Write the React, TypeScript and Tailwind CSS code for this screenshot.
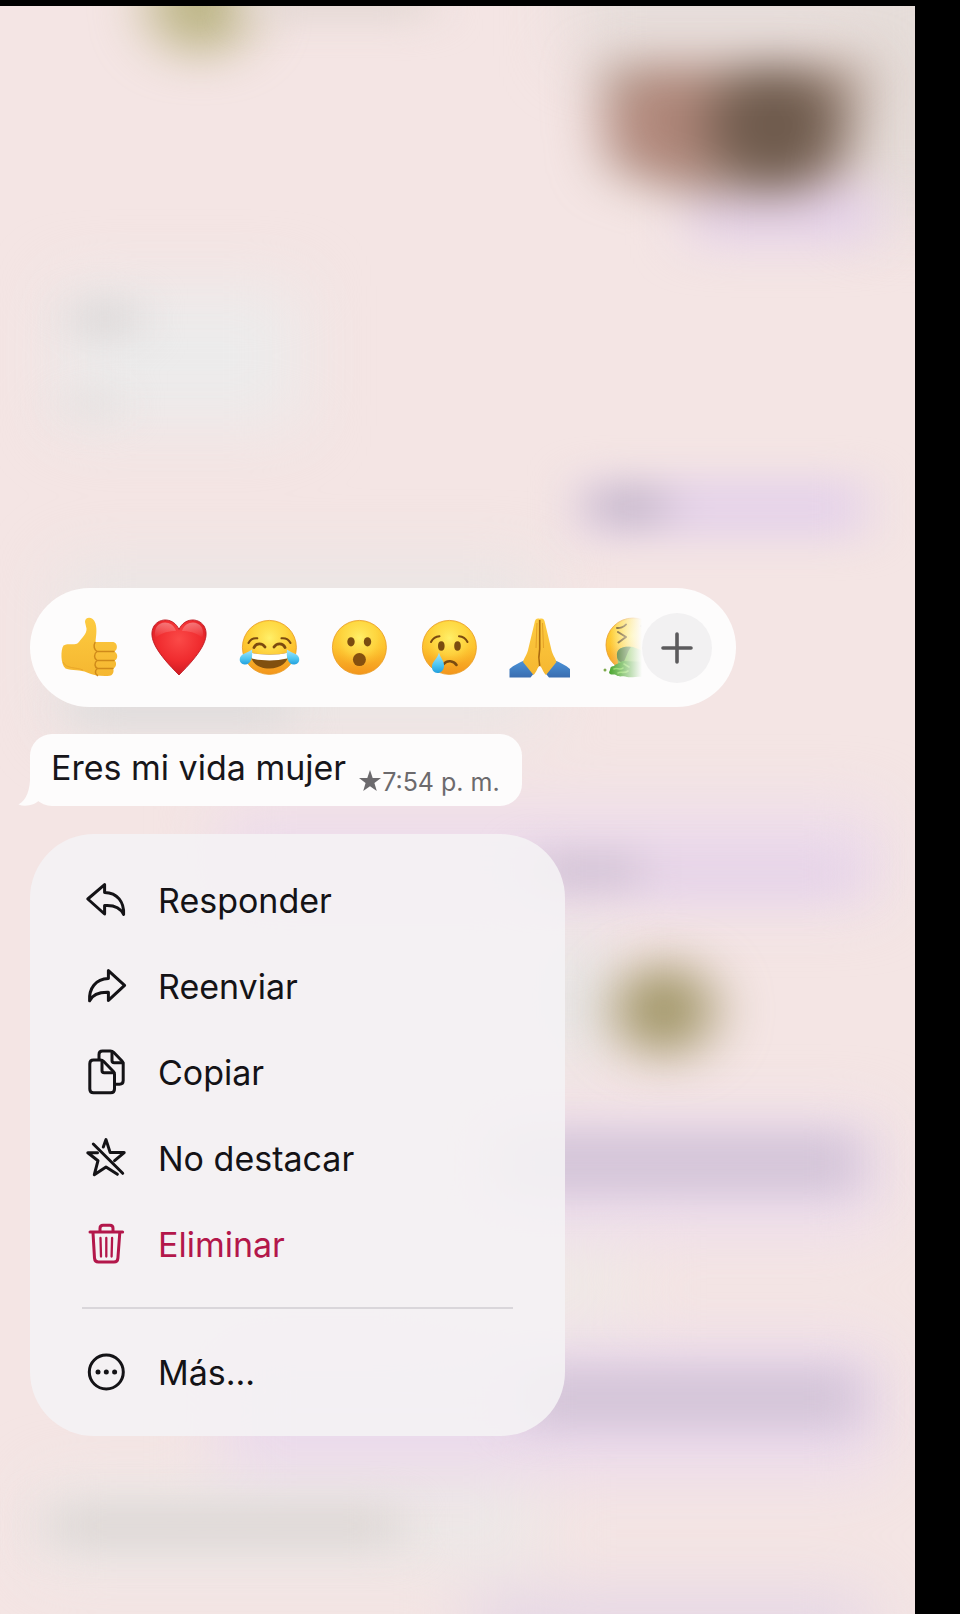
import type { ReactNode } from "react";

type MenuItem = {
  label: string;
  icon: ReactNode;
  danger?: boolean;
};

function MenuIcon({ children }: { children: ReactNode }) {
  return (
    <svg
      viewBox="0 0 48 48"
      className="size-12 shrink-0"
      fill="none"
      stroke="currentColor"
      strokeWidth="3"
      strokeLinecap="round"
      strokeLinejoin="round"
      aria-hidden="true"
    >
      {children}
    </svg>
  );
}

const items: MenuItem[] = [
  {
    label: "Responder",
    icon: (
      <MenuIcon>
        <path d="M22.6 8.6 5.8 23 22.6 38V29.6C31 29 38 31 41.6 38.4 42.2 26 35.5 16.8 22.6 16.5Z" />
      </MenuIcon>
    ),
  },
  {
    label: "Reenviar",
    icon: (
      <MenuIcon>
        <path d="M26.4 8.6 42.6 23.4 26.4 38.4V30.2C18 30 11 31.5 7.6 38.8 6.8 26.5 13.5 17 26.4 16.6Z" />
      </MenuIcon>
    ),
  },
  {
    label: "Copiar",
    icon: (
      <MenuIcon>
        <path d="M17 11V6.5C17 4.2 18.5 3 20.5 3H28.5C29.8 3 30.7 3.4 31.6 4.3L40 13C40.9 14 41.2 14.7 41.2 16V32.5C41.2 35 40 36.2 37.5 36.2H33" />
        <path d="M30 4V12.5C30 14 30.8 14.8 32.2 14.8H41" />
        <path d="M11.5 12H18.5C19.8 12 20.6 12.3 21.5 13.2L31.4 23.5C32.3 24.5 32.5 25.2 32.5 26.4V41C32.5 43.5 31.2 44.8 28.7 44.8H11.5C9 44.8 7.8 43.5 7.8 41V15.800C7.8 13.3 9 12 11.5 12Z" />
        <path d="M20 13V22.5C20 24 20.6 24.8 22.2 24.8H32" />
      </MenuIcon>
    ),
  },
  {
    label: "No destacar",
    icon: (
      <MenuIcon>
        <path d="M11.3 10 40.7 39.3" />
        <path d="M21.3 13 24 5.6 28.2 18.6H42.2L32.6 26.7" />
        <path d="M15.5 18.7H5.8L16 26.7 12.3 40.7 24 33 35.4 40.3" />
      </MenuIcon>
    ),
  },
  {
    label: "Eliminar",
    danger: true,
    icon: (
      <MenuIcon>
        <path d="M8 12H40.6" />
        <path d="M18 11.6V8.2C18 6.2 19 5.2 21 5.2H28C30 5.2 31 6.2 31 8.2V11.6" />
        <path d="M11 12.6 12.5 38.2C12.7 40.9 13.8 42.100 16.4 42.100H32C34.6 42.100 35.7 40.9 35.9 38.2L37.8 12.6" />
        <path strokeWidth="2.3" d="M18.5 18 19 36.5M24.3 18V36.5M30.1 18 29.6 36.5" />
      </MenuIcon>
    ),
  },
];

const moreItem: MenuItem = {
  label: "Más...",
  icon: (
    <MenuIcon>
      <circle cx="24.3" cy="24" r="17" />
      <g fill="currentColor" stroke="none">
        <circle cx="16" cy="24" r="2.5" />
        <circle cx="24.3" cy="24" r="2.5" />
        <circle cx="32.6" cy="24" r="2.5" />
      </g>
    </MenuIcon>
  ),
};

function EmojiDefs() {
  return (
    <svg className="absolute size-0" aria-hidden="true">
      <defs>
        <linearGradient id="face" x1="0" y1="0" x2="0" y2="1">
          <stop offset="0" stopColor="#fcd23a" />
          <stop offset="0.5" stopColor="#fdc22e" />
          <stop offset="1" stopColor="#f3951c" />
        </linearGradient>
        <radialGradient id="shine" cx="0.5" cy="0.32" r="0.55">
          <stop offset="0" stopColor="#fff06a" />
          <stop offset="0.6" stopColor="#ffde48" stopOpacity="0.6" />
          <stop offset="1" stopColor="#ffc52e" stopOpacity="0" />
        </radialGradient>
        <linearGradient id="skin" x1="0" y1="0" x2="0" y2="1">
          <stop offset="0" stopColor="#fdcb40" />
          <stop offset="1" stopColor="#f5b731" />
        </linearGradient>
        <radialGradient id="heart" cx="0.5" cy="0.35" r="0.65">
          <stop offset="0" stopColor="#fb4a48" />
          <stop offset="0.6" stopColor="#f02c2f" />
          <stop offset="1" stopColor="#cf1a22" />
        </radialGradient>
        <linearGradient id="gloss" x1="0" y1="0" x2="0" y2="1">
          <stop offset="0" stopColor="#ffffff" stopOpacity="0.5" />
          <stop offset="1" stopColor="#ffffff" stopOpacity="0" />
        </linearGradient>
        <linearGradient id="tear" x1="0" y1="0" x2="0" y2="1">
          <stop offset="0" stopColor="#a9e6fb" />
          <stop offset="0.6" stopColor="#4fc6f1" />
          <stop offset="1" stopColor="#239fdd" />
        </linearGradient>
        <linearGradient id="sleeve" x1="0" y1="0" x2="0" y2="1">
          <stop offset="0" stopColor="#4b93d8" />
          <stop offset="1" stopColor="#3a6db0" />
        </linearGradient>
      </defs>
    </svg>
  );
}

function Emoji({ children }: { children: ReactNode }) {
  return (
    <svg viewBox="0 0 60 60" className="size-[60px] shrink-0 overflow-visible" aria-hidden="true">
      {children}
    </svg>
  );
}

function Face({ cx = 29.4, cy = 29.4 }: { cx?: number; cy?: number }) {
  return (
    <>
      <circle cx={cx} cy={cy} r="27" fill="url(#face)" stroke="#e99a22" strokeWidth="0.8" />
      <circle cx={cx} cy={cy} r="26" fill="url(#shine)" />
    </>
  );
}

const reactions = [
  {
    name: "Me gusta",
    art: (
      <Emoji>
        <path
          d="M25 4C25 -1.5 33 -2 35.5 5.5 37.3 12 36 18 35.5 24H53.5C58 25 58 32.5 54 33.5 58.5 35 58 41.5 54.5 42.5 57 44 56.5 49.5 53 50.5 54.5 53 53 57.5 49.5 57.8 42 58.4 33 57.5 27 54.5 21 51.5 12 53 5.5 50.5 0.5 46 0.5 32 3.5 27.5 8 24.500 14 28 18 25 22 20 27 15.500 26.500 10.500Z"
          fill="url(#skin)"
        />
        <path
          d="M35 24.5C33 28 34.5 32 37 33.5H54M37 33.5C33.5 36 34 40.5 37 42.5H54M37 42.5C34 45 34.5 49 37.5 50.5H53M37.5 50.5C34.5 52.5 35 56 37.5 57.5"
          fill="none"
          stroke="#cf8a1a"
          strokeWidth="1.5"
          strokeLinecap="round"
        />
        <path d="M3 44C6 51 16 49 23 52" fill="none" stroke="#e09a22" strokeWidth="1" opacity="0.6" />
      </Emoji>
    ),
  },
  {
    name: "Me encanta",
    art: (
      <Emoji>
        <path
          d="M29 11.5C34 0 48 -1 54 8 61 20 50 36 29 57 8 36 -3 20 4 8 10 -1 24 0 29 11.5Z"
          fill="url(#heart)"
          stroke="#bd1a22"
          strokeWidth="0.9"
        />
        <path d="M26 13C23 3 11 2 6.5 9 4 14 5 19 6 20 11 14 21 13 26 13Z" fill="url(#gloss)" opacity="0.7" />
        <path d="M32 13C35 3 47 2 51.5 9 54 14 53 19 52 20 47 14 37 13 32 13Z" fill="url(#gloss)" opacity="0.7" />
      </Emoji>
    ),
  },
  {
    name: "Me divierte",
    art: (
      <Emoji>
        <Face />
        <g fill="none" stroke="#7b4a10" strokeLinecap="round">
          <path strokeWidth="2.8" d="M14 29.5C16 24.5 22.5 25 25 29M34 29C36.5 25 43 24.5 45 29.5" />
          <path strokeWidth="2" d="M8.5 25C10 22 13 19.8 17.3 20.3M50.5 25C49 22 46 19.8 41.5 20.3" />
        </g>
        <path d="M10.5 34.5C22 37.5 37 37.5 48.5 34.5 49 44 41 50.5 29.5 50.5 18 50.5 10 44 10.5 34.5Z" fill="#81500f" />
        <path d="M10.5 34.5C22 37.5 37 37.5 48.5 34.5 48.5 37 48 39 47 40.5 36 43 23 43 12 40.5 11 39 10.5 37 10.5 34.5Z" fill="#fff" />
        <path d="M12 31.5C13 39 11 47 4.5 46.5 -1.5 46 -1.5 39 2.5 36.5 6 34.5 10 33.5 12 31.5Z" fill="url(#tear)" />
        <path d="M47 31.5C46 39 48 47 54.5 46.5 60.5 46 60.5 39 56.5 36.5 53 34.5 49 33.5 47 31.5Z" fill="url(#tear)" />
      </Emoji>
    ),
  },
  {
    name: "Me asombra",
    art: (
      <Emoji>
        <Face />
        <ellipse cx="21" cy="23.8" rx="3.7" ry="4.6" fill="#7a4c10" />
        <ellipse cx="37.5" cy="23.8" rx="3.7" ry="4.6" fill="#7a4c10" />
        <circle cx="29.4" cy="41.6" r="6.5" fill="#85500f" />
      </Emoji>
    ),
  },
  {
    name: "Me entristece",
    art: (
      <Emoji>
        <Face />
        <ellipse cx="21.3" cy="28" rx="3.3" ry="4.8" fill="#7a4c10" />
        <ellipse cx="37.5" cy="28" rx="3.3" ry="4.8" fill="#7a4c10" />
        <g fill="none" stroke="#7b4a10" strokeLinecap="round">
          <path strokeWidth="2" d="M11 24C12.5 21 15.5 18.5 19.5 18.2M39 18.2C43 18.5 46 21 47.5 24" />
          <path strokeWidth="2.6" d="M24 45.8C27 42 33.5 42.3 36.5 47" />
        </g>
        <path d="M19 34.5C20.5 40.5 24.5 43 24 48.5 23.5 52.5 21 55 17.5 55 14 55 11.5 52 12 48 12.5 43.5 17.5 40.5 19 34.5Z" fill="url(#tear)" />
      </Emoji>
    ),
  },
  {
    name: "Gracias",
    art: (
      <Emoji>
        <path d="M14 42.5C9 45 4 47 -0.5 51V59.5H20.5L25 54Z" fill="url(#sleeve)" />
        <path d="M45.5 42.5C50.5 45 55.5 47 60 51V59.5H39L34.5 54Z" fill="url(#sleeve)" />
        <path
          d="M29.7 0.8C27 0 25 1 24.5 5L18.5 30C17.5 36 14.5 39 13 44L23.5 57C27 53.5 27.5 49 29.7 48 32 49 32.5 53.5 36 57L46.5 44C45 39 42 36 41 30L35 5C34.5 1 32.5 0 29.7 0.8Z"
          fill="url(#skin)"
        />
        <path d="M29.7 2V31C28.5 37 28.5 42 29.7 48" fill="none" stroke="#a9690f" strokeWidth="1.6" />
        <path d="M27 5 26 30M32.5 5 33.5 30" fill="none" stroke="#e09822" strokeWidth="1" opacity="0.8" />
      </Emoji>
    ),
  },
  {
    name: "Me da asco",
    art: (
      <Emoji>
        <Face cx={33} cy={27} />
        <g fill="none" stroke="#6d5218" strokeWidth="2" strokeLinecap="round" strokeLinejoin="round">
          <path d="M17 10C19.5 10.5 24 9 26 6.5M18 14 26 19 18.5 24.5M41 8 44 9" />
        </g>
        <path d="M17 38C16 30 24 28 33 29L46 34V58H20Z" fill="#7fc24f" />
        <path d="M17 38C16 30 24 28 31 29 27 34 26 41 23 45 20 44 17 42 17 38Z" fill="#4e7c34" />
        <path
          d="M22 43C20 46 16 45 14 48 9 48 11 52 9 54 9 58 14 55.5 16 57 20 60 23 57 27 59 32 60 38 58 46 59V44Z"
          fill="#4fa833"
        />
        <path d="M14 51C17 49 20 53 23 50M18 55C21 53 24 56 28 53M24 46 29 49" fill="none" stroke="#84d455" strokeWidth="1.6" strokeLinecap="round" />
        <circle cx="5" cy="52" r="1.5" fill="#7ea84c" />
      </Emoji>
    ),
  },
];

/* Blurred conversation behind the open menu */
function ChatBackdrop() {
  return (
    <svg
      viewBox="0 0 915 1608"
      preserveAspectRatio="none"
      className="absolute inset-0 size-full"
      colorInterpolationFilters="sRGB"
      aria-hidden="true"
    >
      <defs>
        <filter id="blurL" filterUnits="userSpaceOnUse" x="-100" y="-100" width="1115" height="1808">
          <feGaussianBlur stdDeviation="32" />
        </filter>
        <filter id="blurM" filterUnits="userSpaceOnUse" x="-100" y="-100" width="1115" height="1808">
          <feGaussianBlur stdDeviation="27 23" />
        </filter>
        <filter id="blurS" filterUnits="userSpaceOnUse" x="-100" y="-100" width="1115" height="1808">
          <feGaussianBlur stdDeviation="24 17" />
        </filter>
      </defs>
      <rect width="915" height="1608" fill="#f4e5e4" />
      <g filter="url(#blurL)">
        <rect x="570" y="-60" width="400" height="110" fill="#e6ddda" />
        <rect x="850" y="-20" width="120" height="230" fill="#e5dcd8" />
        <rect x="60" y="280" width="240" height="140" fill="#ecebeb" />
        <rect x="60" y="560" width="480" height="160" fill="#e9e6e5" />
        <rect x="220" y="805" width="660" height="90" fill="#ecdbec" />
        <rect x="540" y="930" width="60" height="120" fill="#e3e6e6" />
        <rect x="500" y="1115" width="380" height="110" fill="#ecdcec" />
        <rect x="450" y="1240" width="180" height="80" fill="#efe9e6" />
        <rect x="220" y="1340" width="660" height="125" fill="#ead9ec" />
        <rect x="40" y="1480" width="500" height="80" fill="#ece8e7" />
        <rect x="470" y="1590" width="400" height="60" fill="#e3d5e6" />
      </g>
      <g filter="url(#blurM)">
        <rect x="690" y="175" width="185" height="62" fill="#e4d1ea" />
        <path d="M600 55H870L850 165 800 192H700L610 165Z" fill="#b09b8e" />
        <ellipse cx="680" cy="120" rx="76" ry="54" fill="#b0877a" />
        <ellipse cx="775" cy="120" rx="68" ry="60" fill="#6f5b4d" />
        <ellipse cx="200" cy="0" rx="52" ry="48" fill="#bcb585" />
        <ellipse cx="664" cy="1004" rx="50" ry="46" fill="#a3986a" />
      </g>
      <g filter="url(#blurS)">
        <rect x="250" y="-20" width="180" height="34" fill="#e2d7d3" />
        <rect x="75" y="293" width="60" height="40" fill="#dcd8d8" />
        <rect x="70" y="383" width="45" height="30" fill="#e3dfde" />
        <rect x="580" y="470" width="285" height="64" fill="#e6d4e9" />
        <ellipse cx="628" cy="500" rx="42" ry="24" fill="#cabccd" />
        <rect x="70" y="686" width="220" height="34" fill="#dedbdb" />
        <rect x="530" y="842" width="125" height="46" fill="#d6c6d8" />
        <rect x="640" y="842" width="215" height="50" fill="#e7d5e8" />
        <rect x="500" y="1124" width="360" height="66" fill="#d5c6d9" />
        <rect x="520" y="1360" width="340" height="64" fill="#d5c6d9" />
        <rect x="50" y="1496" width="350" height="48" fill="#dfd9d7" />
      </g>
    </svg>
  );
}

function MenuRow({ item }: { item: MenuItem }) {
  return (
    <li>
      <button
        type="button"
        className={`flex h-[86px] w-full items-center gap-7 px-[52px] text-left text-[34px] ${
          item.danger ? "text-[#b3174a]" : "text-[#141316]"
        }`}
      >
        {item.icon}
        {item.label}
      </button>
    </li>
  );
}

export default function App() {
  return (
    <div className="flex min-h-screen bg-black pt-1.5 pr-[45px] font-['Inter','Liberation_Sans',sans-serif]">
      <EmojiDefs />
      <main className="relative isolate flex-1 overflow-hidden px-[30px] pt-[582px]">
        <ChatBackdrop />

        <div className="relative flex flex-col items-start">
          <div className="flex h-[119px] w-full max-w-[706px] items-center rounded-full bg-[#fdfcfc] pr-6 pl-[15px]">
            <div className="relative flex flex-1 overflow-hidden py-4">
              {reactions.map((reaction) => (
                <button
                  key={reaction.name}
                  type="button"
                  aria-label={reaction.name}
                  className="flex w-[90px] shrink-0 justify-center"
                >
                  {reaction.art}
                </button>
              ))}
              <div className="pointer-events-none absolute inset-y-0 right-0 w-8 bg-linear-to-r from-[#fdfcfc]/0 to-[#fdfcfc]" />
            </div>
            <button
              type="button"
              aria-label="Más reacciones"
              className="flex size-[70px] shrink-0 items-center justify-center rounded-full bg-[#f2f1f2] text-[#5c5b5d]"
            >
              <svg viewBox="0 0 32 32" className="size-8" fill="none" stroke="currentColor" strokeWidth="3.6" strokeLinecap="round" aria-hidden="true">
                <path d="M16 2V30M2 16H30" />
              </svg>
            </button>
          </div>

          <div className="relative mt-[27px] flex h-[72px] items-start rounded-[22px] bg-[#fdfcfc] pr-[22px] pl-[21px]">
            <svg viewBox="0 0 36 36" className="absolute bottom-0 -left-3 size-9 text-[#fdfcfc]" fill="currentColor" aria-hidden="true">
              <path d="M12 0C13 16 10 29 0.5 34.5 8 37.5 17 34.5 21 30.5L36 36V0Z" />
            </svg>
            <p className="relative pt-2 text-[34px] leading-[52px] text-[#17161a]">Eres mi vida mujer</p>
            <div className="relative ml-3 flex items-center pt-8 text-[#6c6a6d]">
              <svg viewBox="0 0 24 24" className="size-6" fill="currentColor" aria-hidden="true">
                <path d="M12 0 14.7 8H23L16.4 13 18.8 21 12 16.2 5.2 21 7.6 13 1 8H9.3Z" />
              </svg>
              <time className="text-[25px] leading-8">7:54 p. m.</time>
            </div>
          </div>

          <ul className="mt-7 w-full max-w-[535px] rounded-[64px] bg-[#f4f2f4]/90 pt-[23px] pb-[21px]">
            {items.map((item) => (
              <MenuRow key={item.label} item={item} />
            ))}
            <li role="separator" className="mx-[52px] my-5 h-0.5 bg-[#d9d6da]" />
            <MenuRow item={moreItem} />
          </ul>
        </div>
      </main>
    </div>
  );
}
